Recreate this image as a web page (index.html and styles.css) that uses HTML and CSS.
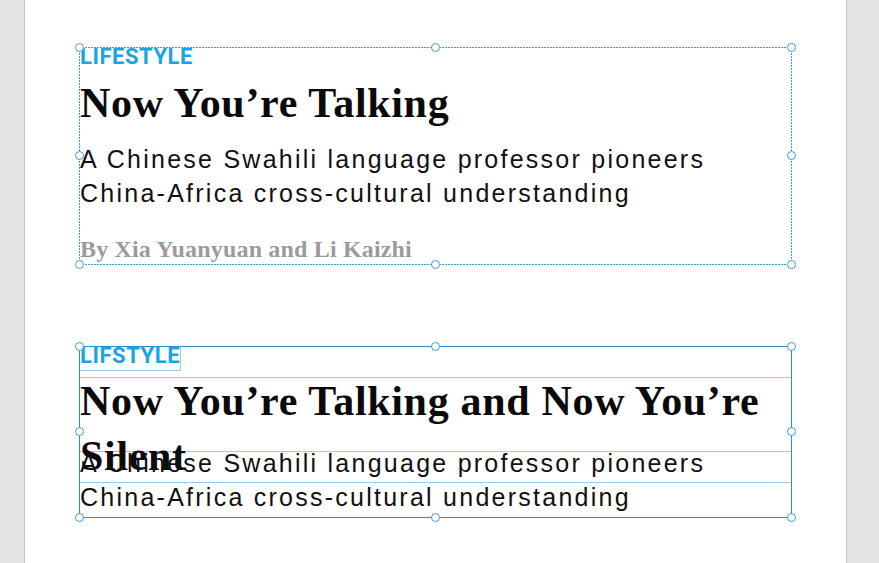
FILE: index.html
```html
<!DOCTYPE html>
<html lang="en">
<head>
<meta charset="utf-8">
<title>Story frames</title>
<link rel="stylesheet" href="styles.css">
</head>
<body>
<div class="page">
  <div class="frame frame-dashed">
    <div class="kicker">LIFESTYLE</div>
    <h1 class="headline">Now You’re Talking</h1>
    <p class="subtitle">A Chinese Swahili language professor pioneers China-Africa cross-cultural understanding</p>
    <p class="byline">By Xia Yuanyuan and Li Kaizhi</p>
    <span class="handle h-tl"></span><span class="handle h-tc"></span><span class="handle h-tr"></span>
    <span class="handle h-ml"></span><span class="handle h-mr"></span>
    <span class="handle h-bl"></span><span class="handle h-bc"></span><span class="handle h-br"></span>
  </div>

  <div class="frame frame-solid">
    <div class="kicker-box"><div class="kicker">LIFSTYLE</div></div>
    <div class="headline-box">
      <h1 class="headline headline-tight">Now You’re Talking and Now You’re Silent</h1>
    </div>
    <div class="subtitle-box">
      <p class="subtitle subtitle-tight">A Chinese Swahili language professor pioneers China-Africa cross-cultural understanding</p>
    </div>
    <span class="handle h-tl"></span><span class="handle h-tc"></span><span class="handle h-tr"></span>
    <span class="handle h-ml"></span><span class="handle h-mr"></span>
    <span class="handle h-bl"></span><span class="handle h-bc"></span><span class="handle h-br"></span>
  </div>
</div>
</body>
</html>
```

FILE: styles.css
```css
html, body {
  margin: 0;
  padding: 0;
}
body {
  background: #e4e4e4;
  height: 563px;
  overflow: hidden;
}
.page {
  box-sizing: border-box;
  margin-left: 24px;
  width: 823px;
  height: 563px;
  background: #ffffff;
  border-left: 1px solid #c4c4c4;
  border-right: 1px solid #c4c4c4;
  padding-top: 47px;
  padding-left: 54px;
}
.frame {
  position: relative;
  box-sizing: border-box;
  width: 713px;
}
.frame-dashed {
  height: 218px;
  border: 1px solid transparent;
  background:
    repeating-linear-gradient(to right, #3d9bd6 0 2px, transparent 2px 3px) top left / 100% 1px no-repeat,
    repeating-linear-gradient(to right, #3d9bd6 0 2px, transparent 2px 3px) bottom left / 100% 1px no-repeat,
    repeating-linear-gradient(to bottom, #3d9bd6 0 2px, transparent 2px 3px) top left / 1px 100% no-repeat,
    repeating-linear-gradient(to bottom, #3d9bd6 0 2px, transparent 2px 3px) top right / 1px 100% no-repeat;
  background-origin: border-box;
  background-clip: border-box;
}
.frame-solid {
  height: 172px;
  margin-top: 81px;
  border: 1px solid #2f90c9;
}
.kicker {
  font-family: Roboto, "Liberation Sans", sans-serif;
  font-weight: 700;
  font-size: 22px;
  line-height: 17px;
  color: #1aa5e2;
  letter-spacing: 0.55px;
}
.headline {
  margin: 11px 0 0 0;
  font-family: "Liberation Serif", serif;
  font-weight: 700;
  font-size: 42px;
  line-height: 55px;
  letter-spacing: 0.68px;
  color: #0a0a0a;
}
.subtitle {
  margin: 11px 0 0 0;
  font-family: "Liberation Sans", Arial, sans-serif;
  font-size: 25px;
  line-height: 34px;
  letter-spacing: 2.25px;
  color: #111111;
}
.byline {
  margin: 25px 0 0 0;
  font-family: "Liberation Serif", serif;
  font-weight: 700;
  font-size: 24px;
  line-height: 28px;
  letter-spacing: 0.17px;
  color: #9b9b9b;
}
.kicker-box {
  width: 101px;
  height: 24px;
  box-sizing: border-box;
  border-right: 1px solid #9ccbe6;
  border-bottom: 1px solid #9ccbe6;
}
.headline-box {
  margin-top: 6px;
  height: 74px;
  box-sizing: border-box;
  border-top: 1px solid #9ccbe6;
}
.headline-tight {
  margin-top: -4px;
}
.subtitle-box {
  height: 66px;
  box-sizing: border-box;
  border-top: 1px solid #9ccbe6;
  background: linear-gradient(to bottom, transparent 30px, #9ccbe6 30px, #9ccbe6 31px, transparent 31px);
}
.subtitle-tight {
  margin-top: -6px;
}
.handle {
  position: absolute;
  box-sizing: border-box;
  width: 9px;
  height: 9px;
  border: 1px solid #3f9ed8;
  border-radius: 50%;
  background: #ffffff;
}
.h-tl { left: -5px; top: -5px; }
.h-tc { left: 50%; margin-left: -5px; top: -5px; }
.h-tr { right: -5px; top: -5px; }
.h-ml { left: -5px; top: 50%; margin-top: -5px; }
.h-mr { right: -5px; top: 50%; margin-top: -5px; }
.h-bl { left: -5px; bottom: -5px; }
.h-bc { left: 50%; margin-left: -5px; bottom: -5px; }
.h-br { right: -5px; bottom: -5px; }
```
